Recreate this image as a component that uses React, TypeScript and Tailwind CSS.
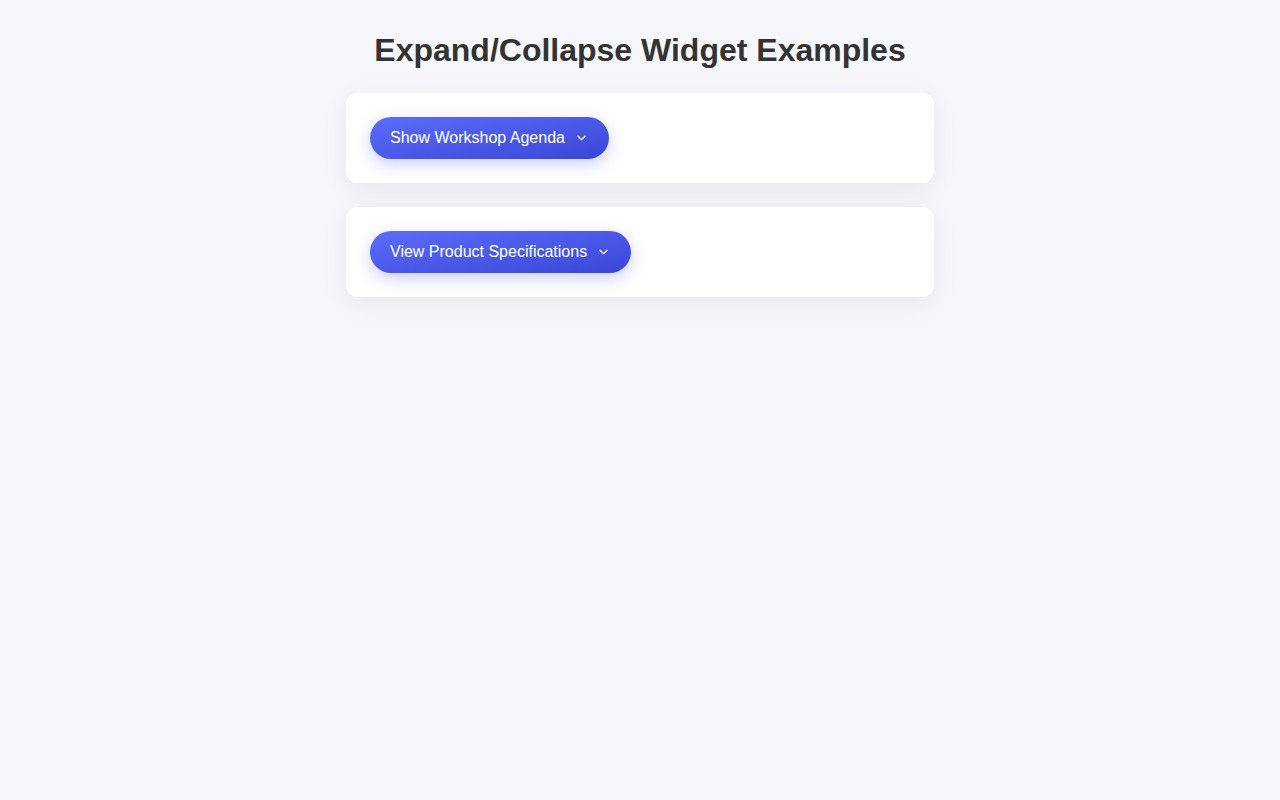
import React from "react"

// Two collapsible panels, both closed: only the toggle button is visible.
const panels = [
  { id: "agenda", label: "Show Workshop Agenda" },
  { id: "specs", label: "View Product Specifications" },
]

function Chevron() {
  return (
    <svg width="9" height="6" viewBox="0 0 9 6" fill="none" stroke="currentColor" strokeWidth="1.3" strokeLinecap="round" strokeLinejoin="round" aria-hidden="true">
      <path d="M1 1.2 4.5 4.6 8 1.2" />
    </svg>
  )
}

export default function App() {
  return (
    <div className="min-h-screen bg-[#f5f7fb] px-5 pt-[32px] font-['Liberation_Sans',Arial,sans-serif]">
      <h1 className="mb-[24px] text-center text-[32px] font-bold leading-[37px] text-[#333333]">
        Expand/Collapse Widget Examples
      </h1>
      <div className="mx-auto flex w-[588px] flex-col gap-6">
        {panels.map((p) => (
          <div key={p.id} className="rounded-xl bg-white p-6 shadow-[0_6px_28px_rgba(0,0,0,0.07)]">
            <button
              type="button"
              className="inline-flex h-[42px] items-center gap-3 rounded-full bg-gradient-to-br from-[#5b6dfb] to-[#3b45d6] pl-5 pr-[23px] text-base text-white shadow-[0_5px_16px_rgba(79,90,240,0.3)]"
            >
              {p.label}
              <Chevron />
            </button>
          </div>
        ))}
      </div>
    </div>
  )
}
